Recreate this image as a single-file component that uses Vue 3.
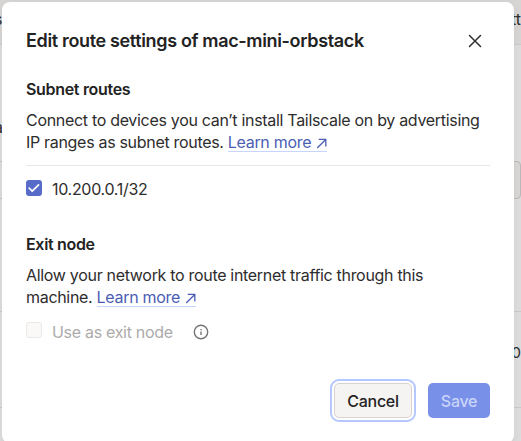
<script setup>
import { ref } from 'vue'

const subnetEnabled = ref(true)
const exitNode = ref(false)
</script>

<template>
  <div class="page">
    <div class="backdrop" aria-hidden="true">
      <header class="nav"><span class="nav-left">s</span><span>tt</span></header>
      <div class="intro">a</div>
      <div class="toolbar"><span class="search"></span><span class="filter"></span></div>
      <div class="table-head"></div>
      <div class="table-row">0</div>
      <div class="table-row last"></div>
    </div>

    <section class="dialog" role="dialog" aria-labelledby="dialog-title">
      <header class="dialog-header">
        <h1 id="dialog-title">Edit route settings of mac-mini-orbstack</h1>
        <button class="close" aria-label="Close">
          <svg width="14" height="14" viewBox="0 0 14 14"><path d="M1.5 1.5 12.5 12.5M12.5 1.5 1.5 12.5" /></svg>
        </button>
      </header>

      <section class="subnets">
        <h2>Subnet routes</h2>
        <p>
          <span class="line">Connect to devices you can’t install Tailscale on by advertising</span>
          <span class="line">IP ranges as subnet routes. <a>Learn more <svg width="11" height="11" viewBox="0 0 11 11"><path d="M1.2 10 9.5 1.7M2.7 1.4h7.1v7.1" /></svg></a></span>
        </p>
        <label class="option route">
          <input v-model="subnetEnabled" type="checkbox" />
          <span class="box checked"><svg width="16" height="16" viewBox="0 0 16 16"><path d="m3.2 8.2 3 3L12.6 4.8" /></svg></span>
          <span>10.200.0.1/32</span>
        </label>
      </section>

      <section class="exit">
        <h2>Exit node</h2>
        <p>
          <span class="line">Allow your network to route internet traffic through this</span>
          <span class="line">machine. <a>Learn more <svg width="11" height="11" viewBox="0 0 11 11"><path d="M1.2 10 9.5 1.7M2.7 1.4h7.1v7.1" /></svg></a></span>
        </p>
        <label class="option disabled">
          <input v-model="exitNode" type="checkbox" disabled />
          <span class="box"></span>
          <span>Use as exit node</span>
          <svg class="info" width="16" height="16" viewBox="0 0 16 16"><circle cx="8" cy="8" r="6.7" /><path d="M8 7.5v3.4M8 5v1.3" /></svg>
        </label>
      </section>

      <footer>
        <button class="cancel">Cancel</button>
        <button class="save" disabled>Save</button>
      </footer>
    </section>
  </div>
</template>

<style>
body { overflow: hidden; }
</style>

<style scoped>
* { box-sizing: border-box; }
.page {
  position: relative;
  width: 521px;
  height: 441px;
  overflow: hidden;
  background: #dcdcdc;
  color: #2e2d2d;
  font: 400 16px/22px Inter, sans-serif;
}
.nav {
  display: flex;
  justify-content: space-between;
  height: 45px;
  padding: 8px 0 0;
  border-bottom: 1px solid #cbcaca;
  background: #d6d5d4;
}
.nav-left { margin-left: -6px; }
.intro { height: 116px; padding-top: 71px; margin-left: -6px; }
.toolbar { display: flex; justify-content: space-between; height: 38px; }
.search { width: 5px; border: solid #c4c3c3; border-width: 1px 0; }
.filter { width: 20px; border: 1px solid #bab9b9; border-radius: 4px; background: #d7d6d4; }
.table-head { height: 113px; border-bottom: 1px solid #c9c8c8; }
.table-row { height: 96px; padding-top: 30px; border-bottom: 1px solid #c9c8c8; text-align: right; font-size: 15px; }
.last { background: #dcdcdc; }
.dialog {
  position: absolute;
  left: 2px;
  top: 2px;
  width: 512px;
  height: 441px;
  padding: 24px;
  border-radius: 8px;
  background: #fff;
  box-shadow: 0 3px 10px rgb(0 0 0 / 5%);
}
.dialog-header { display: flex; justify-content: space-between; height: 52px; }
h1, h2, p { margin: 0; }
h1 { padding-top: 2px; color: #232222; font-size: 18px; font-weight: 600; line-height: 26px; letter-spacing: -.35px; white-space: nowrap; }
button { padding: 0; font: inherit; }
.close { width: 30px; height: 30px; display: grid; place-items: center; border: 0; background: none; }
.close svg { fill: none; stroke: #302f2f; stroke-width: 1.5; stroke-linecap: round; }
h2 { color: #232222; font-size: 16px; font-weight: 600; line-height: 22px; letter-spacing: -.32px; }
p { margin-top: 9px; }
.line { display: block; white-space: nowrap; letter-spacing: -.31px; }
a { display: inline-block; height: 21px; border-bottom: 1px solid #c7d6ff; color: #4b5eb4; line-height: 22px; vertical-align: top; }
a svg { margin-left: 1px; fill: none; stroke: currentColor; stroke-width: 1.3; vertical-align: -1px; }
.subnets { height: 155px; }
.route { margin-top: 12px; padding-top: 12px; border-top: 1px solid #e8e7e7; }
.option { display: flex; align-items: flex-start; letter-spacing: -.3px; }
.option input { display: none; }
.box { flex: none; width: 16px; height: 16px; margin-top: 2px; margin-right: 10px; border: 1px solid #ebe8e6; border-radius: 3px; background: #faf9f8; }
.checked { border: 0; background: #566cc8; }
.checked svg { display: block; fill: none; stroke: #fff; stroke-width: 1.7; stroke-linecap: round; stroke-linejoin: round; }
.disabled { margin-top: 13px; color: #acabab; }
.disabled .box { margin-top: 1px; }
.info { margin: 3px 0 0 20.5px; fill: none; stroke: #777575; stroke-width: 1.4; }
.exit { height: 150px; }
footer { display: flex; justify-content: flex-end; gap: 16px; }
footer button { height: 35px; border-radius: 5px; font-weight: 500; letter-spacing: -.3px; }
.cancel { width: 78px; color: #242323; border: 1px solid #d8d3d1; background: #f6f4f2; outline: 2px solid #b4c7ff; outline-offset: 2px; }
.save { width: 62px; border: 0; color: #cad4fa; background: #7990e8; }
</style>
